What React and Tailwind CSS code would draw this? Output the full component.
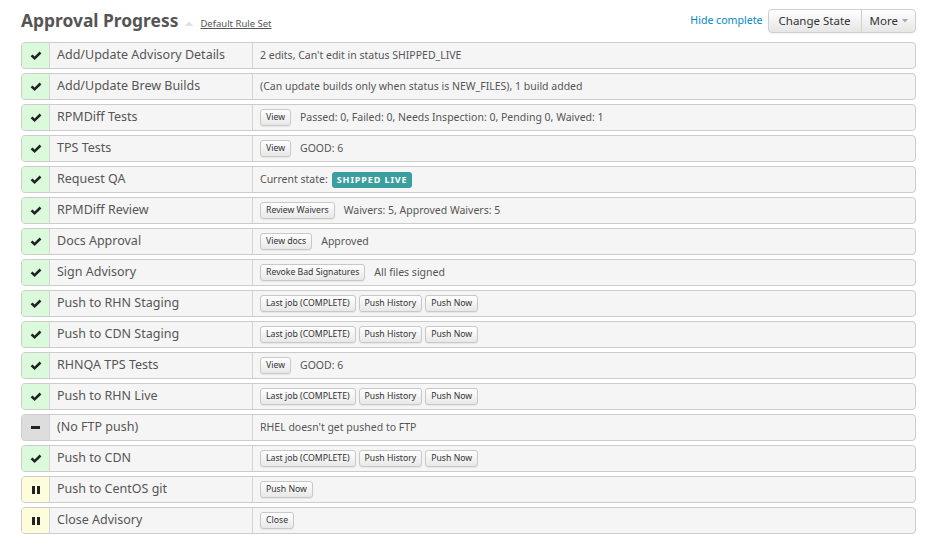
import { useState } from 'react';

const rows = [
  { state: 'ok', name: 'Add/Update Advisory Details', text: "2 edits, Can't edit in status SHIPPED_LIVE" },
  { state: 'ok', name: 'Add/Update Brew Builds', text: '(Can update builds only when status is NEW_FILES), 1 build added' },
  { state: 'ok', name: 'RPMDiff Tests', buttons: ['View'], text: 'Passed: 0, Failed: 0, Needs Inspection: 0, Pending 0, Waived: 1' },
  { state: 'ok', name: 'TPS Tests', buttons: ['View'], text: 'GOOD: 6' },
  { state: 'ok', name: 'Request QA', badge: true },
  { state: 'ok', name: 'RPMDiff Review', buttons: ['Review Waivers'], text: 'Waivers: 5, Approved Waivers: 5' },
  { state: 'ok', name: 'Docs Approval', buttons: ['View docs'], text: 'Approved' },
  { state: 'ok', name: 'Sign Advisory', buttons: ['Revoke Bad Signatures'], text: 'All files signed' },
  { state: 'ok', name: 'Push to RHN Staging', buttons: ['Last job (COMPLETE)', 'Push History', 'Push Now'] },
  { state: 'ok', name: 'Push to CDN Staging', buttons: ['Last job (COMPLETE)', 'Push History', 'Push Now'] },
  { state: 'ok', name: 'RHNQA TPS Tests', buttons: ['View'], text: 'GOOD: 6' },
  { state: 'ok', name: 'Push to RHN Live', buttons: ['Last job (COMPLETE)', 'Push History', 'Push Now'] },
  { state: 'na', name: '(No FTP push)', text: "RHEL doesn't get pushed to FTP" },
  { state: 'ok', name: 'Push to CDN', buttons: ['Last job (COMPLETE)', 'Push History', 'Push Now'] },
  { state: 'wait', name: 'Push to CentOS git', buttons: ['Push Now'] },
  { state: 'wait', name: 'Close Advisory', buttons: ['Close'] },
];

const StateIcon = ({ state }) => {
  if (state === 'ok') {
    return (
      <svg width="12" height="10" viewBox="0 0 12 10">
        <path d="M0.6 5.3 L2.5 3.4 L4.6 5.5 L9.6 0.5 L11.4 2.4 L4.6 9.1 Z" fill="#222" />
      </svg>
    );
  }
  if (state === 'na') {
    return <span className="block w-[9px] h-[3px] bg-[#222]" />;
  }
  return (
    <span className="flex gap-[2px]">
      <span className="block w-[3px] h-[8px] bg-[#222]" />
      <span className="block w-[3px] h-[8px] bg-[#222]" />
    </span>
  );
};

const iconBg = {
  ok: 'bg-[#dbf9db]',
  na: 'bg-[#dddddd]',
  wait: 'bg-[#fdfddb]',
};

const SmallButton = ({ children }) => (
  <button className="h-[17px] px-[5px] text-[8.7px] leading-none text-[#333] border border-[#c8c8c8] rounded-[3px] bg-gradient-to-b from-white to-[#e8e8e8] shadow-[0_1px_1px_rgba(0,0,0,0.06)]">
    {children}
  </button>
);

const App = () => {
  const [hideComplete, setHideComplete] = useState(false);

  return (
    <div className="min-h-[545px] bg-white px-[21px] pt-[9px] font-['Noto_Sans','Open_Sans',sans-serif] text-[#555]">
      {/* Header */}
      <div className="flex items-center justify-between h-[24px] mb-[9px]">
        <div className="flex items-end gap-[6px]">
          <h1 className="text-[17.4px] font-bold leading-none text-[#555]">Approval Progress</h1>
          <svg width="10" height="7" viewBox="0 0 10 7" className="mb-[3px]">
            <path d="M0.5 6 L5 1.5 L9.5 6 Z" fill="#e2e2e2" />
          </svg>
          <a href="#" className="text-[9.5px] leading-none underline text-[#555] mb-[1px]">
            Default Rule Set
          </a>
        </div>
        <div className="flex items-center">
          <a
            href="#"
            onClick={(e) => {
              e.preventDefault();
              setHideComplete((h) => !h);
            }}
            className="text-[10.6px] text-[#0088cc] mr-[5px]"
          >
            Hide complete
          </a>
          <div className="flex h-[24px] border border-[#cfcfcf] rounded-[4px] bg-gradient-to-b from-white to-[#e6e6e6] shadow-[0_1px_2px_rgba(0,0,0,0.05)] text-[11.5px] text-[#333]">
            <button className="px-[10px]">Change State</button>
            <button className="pl-[8px] pr-[7px] border-l border-[#cfcfcf] flex items-center gap-[4px]">
              More
              <svg width="6" height="4" viewBox="0 0 6 4">
                <path d="M0 0 L6 0 L3 3.5 Z" fill="#aaa" />
              </svg>
            </button>
          </div>
        </div>
      </div>

      {/* Steps */}
      <div className="flex flex-col gap-[4px]">
        {rows
          .filter((r) => !(hideComplete && r.state === 'ok'))
          .map((row) => (
            <div
              key={row.name}
              className="flex h-[27px] border border-[#cccccc] rounded-[4px] bg-[#f5f5f5] overflow-hidden"
            >
              <div className={`w-[28px] flex items-center justify-center border-r border-[#d4d4d4] ${iconBg[row.state]}`}>
                <StateIcon state={row.state} />
              </div>
              <div className="w-[203px] pl-[7px] flex items-center border-r border-[#d4d4d4] text-[12.5px]">
                {row.name}
              </div>
              <div className="flex-1 pl-[7px] flex items-center gap-[3px] text-[10.5px]">
                {row.buttons &&
                  row.buttons.map((b) => <SmallButton key={b}>{b}</SmallButton>)}
                {row.badge && (
                  <>
                    <span>Current state:</span>
                    <span className="ml-[1px] px-[5px] h-[16px] flex items-center rounded-[3px] bg-[#3a9e9e] text-white text-[9px] font-bold tracking-[0.1em]">
                      SHIPPED LIVE
                    </span>
                  </>
                )}
                {row.text && <span className={row.buttons ? 'ml-[6px]' : ''}>{row.text}</span>}
              </div>
            </div>
          ))}
      </div>
    </div>
  );
};

export default App;
